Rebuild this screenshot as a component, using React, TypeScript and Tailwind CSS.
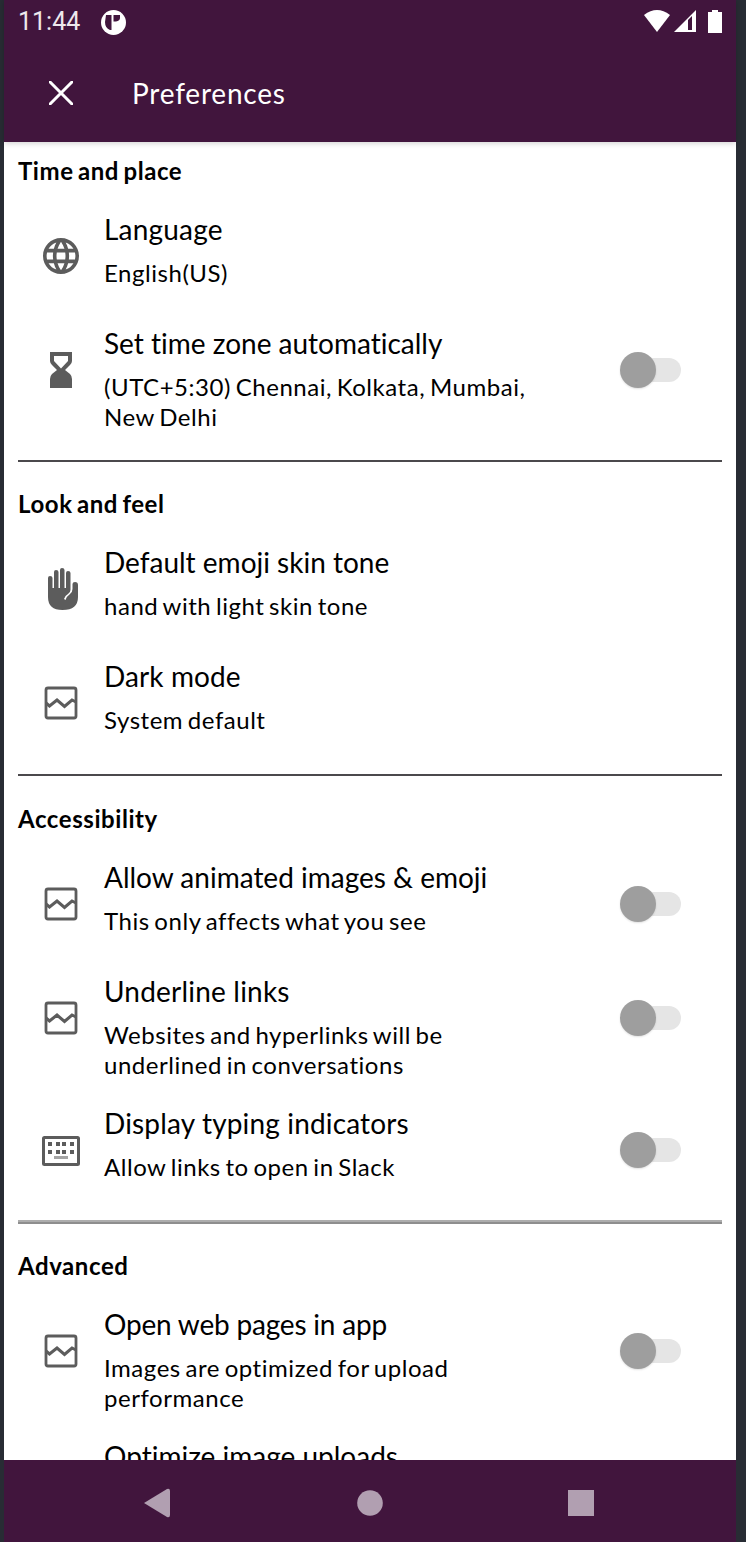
import type { ReactNode } from "react";

const Globe = () => (
  <svg width="36" height="36" viewBox="2 2 20 20" fill="#5c5c5c" className="block">
    <path d="M11.99 2C6.47 2 2 6.48 2 12s4.47 10 9.99 10C17.52 22 22 17.52 22 12S17.52 2 11.99 2zm6.93 6h-2.95c-.32-1.25-.78-2.45-1.38-3.56 1.84.63 3.37 1.91 4.33 3.56zM12 4.04c.83 1.2 1.48 2.53 1.91 3.96h-3.82c.43-1.43 1.08-2.76 1.91-3.96zM4.26 14C4.1 13.36 4 12.69 4 12s.1-1.36.26-2h3.38c-.08.66-.14 1.32-.14 2s.06 1.34.14 2H4.26zm.82 2h2.95c.32 1.25.78 2.45 1.38 3.56-1.84-.63-3.37-1.9-4.33-3.56zm2.95-8H5.08c.96-1.66 2.49-2.93 4.33-3.56C8.81 5.55 8.35 6.75 8.03 8zM12 19.96c-.83-1.2-1.48-2.53-1.91-3.96h3.82c-.43 1.43-1.08 2.76-1.91 3.96zM14.34 14H9.66c-.09-.66-.16-1.32-.16-2s.07-1.35.16-2h4.68c.09.65.16 1.32.16 2s-.07 1.34-.16 2zm.25 5.56c.6-1.11 1.06-2.31 1.38-3.56h2.95c-.96 1.65-2.49 2.93-4.33 3.56zM16.36 14c.08-.66.14-1.32.14-2s-.06-1.34-.14-2h3.38c.16.64.26 1.31.26 2s-.1 1.36-.26 2h-3.38z" />
  </svg>
);

const Hourglass = () => (
  <svg width="22" height="36" viewBox="0 0 22 36" fill="#5c5c5c" className="block">
    <path d="M0 0H22V9Q22 11 20 13L15 18L20 22Q22 24 22 27V36H0V27Q0 24 2 22L7 18L2 13Q0 11 0 9ZM4 4V9L11 16.500L18 9V4Z" fillRule="evenodd" />
  </svg>
);

const Hand = () => (
  <svg width="30" height="42" viewBox="0 0 30 42" fill="#5c5c5c" className="ml-[3px] block">
    <path d="M0 10Q0 8 2 8Q4.500 8 4.500 10V20H6V4Q6 2 8 2Q10.500 2 10.500 4V20H12V2Q12 0 14 0Q16.500 0 16.500 2V20H18V5Q18 3 20 3Q22.500 3 22.500 5V22Q22.500 24 20 26Q16.500 28 16 31L17.500 32Q19 28 22 26Q24.500 24 24.500 21V16Q24.500 14 27 14Q30 14 30 17V29Q30 42 14.500 42Q0 42 0 29Z" />
  </svg>
);

const Picture = () => (
  <svg width="34" height="34" viewBox="0 0 34 34" fill="none" stroke="#5c5c5c" className="block">
    <rect x="2" y="2" width="30" height="30" rx="2" strokeWidth="2.800" />
    <path d="M2 17L5.500 20L13 14L20.500 20.500L28 14L32 16" strokeWidth="3" />
  </svg>
);

const Keyboard = () => (
  <svg width="38" height="30" viewBox="0 0 38 30" className="mt-[1px] block">
    <rect x="1.500" y="1.500" width="35" height="27" rx="1" fill="none" stroke="#5c5c5c" strokeWidth="3" />
    <path d="M6 6h4v4H6zM14 6h4v4h-4zM20 6h4v4h-4zM28 6h4v4h-4zM6 14h4v4H6zM14 14h4v4h-4zM20 14h4v4h-4zM28 14h4v4h-4z" fill="#5c5c5c" />
    <path d="M12 20h14v3H12z" fill="#a5a5a5" />
  </svg>
);

const Toggle = () => (
  <div className="mr-[55px] flex h-[114px] w-[61px] shrink-0 items-center">
    <div className="z-10 h-9 w-9 rounded-full bg-[#9e9e9e] shadow-[0_1px_2px_rgba(0,0,0,0.12)]" />
    <div className="-ml-7 h-6 w-[53px] shrink-0 rounded-full bg-[#e5e5e5]" />
  </div>
);

type RowProps = {
  icon?: ReactNode;
  title: string;
  lines?: string[];
  toggle?: boolean;
  height?: string;
  tracking?: string;
};

const Row = ({ icon, title, lines = [], toggle, height = "h-[114px]", tracking = "" }: RowProps) => (
  <div className={`flex shrink-0 ${height}`}>
    <div className="flex h-[114px] w-[100px] shrink-0 items-center justify-center pl-[14px]">{icon}</div>
    <div className="flex-1 whitespace-nowrap pt-[13px]">
      <div className={`text-[28px] leading-[34px] ${tracking}`}>{title}</div>
      <div className="mt-[12px] text-[24px] leading-[30px] tracking-[0.54px] [word-spacing:-2px]">
        {lines.map((line) => (
          <div key={line}>{line}</div>
        ))}
      </div>
    </div>
    {toggle && <Toggle />}
  </div>
);

const Label = ({ children, size = "h-[70px] pt-[27px]" }: { children: string; size?: string }) => (
  <h2 className={`shrink-0 pl-[14px] text-[24px] font-bold leading-[30px] tracking-[0.57px] [word-spacing:-2px] ${size}`}>
    {children}
  </h2>
);

const Divider = ({ line = "h-[2px] bg-[#4b494c]" }: { line?: string }) => (
  <div className={`mx-[14px] shrink-0 ${line}`} />
);

export default function App() {
  return (
    <div className="flex h-[1542px] w-[746px] bg-[#282c34] pl-1 pr-[10px] font-['Lato',sans-serif] text-black [font-variant-ligatures:none]">
      <div className="flex w-[732px] flex-col bg-white">
        <header className="z-10 h-[142px] shrink-0 bg-[#41153d] text-white shadow-[0_1px_6px_rgba(0,0,0,0.2)]">
          <div className="flex h-11 items-center pl-[14px] pr-[14px]">
            <span className="w-[83px] font-['Roboto',sans-serif] text-[25px] leading-[44px] text-[#eee8ed]">11:44</span>
            <svg width="25" height="25" viewBox="0 0 25 25">
              <circle cx="12.500" cy="12.500" r="12.500" fill="#fff" />
              <path d="M5 5H10.500V20H9Q4 18 4 12ZM12.500 5H19V8Q19 10.500 15 11.500H12.500Z" fill="#41153d" />
            </svg>
            <svg width="78" height="24" viewBox="0 0 78 24" fill="#fff" className="ml-auto">
              <path d="M0 5Q13-5 26 5L13 22Z" />
              <path fillRule="evenodd" d="M30 22L52 0V22ZM44 10V20H48V6Z" />
              <path d="M64 2H68V0H74V2H78V23H64Z" />
            </svg>
          </div>
          <div className="flex h-[98px] items-center pl-[45px]">
            <svg width="24" height="24" viewBox="0 0 24 24" fill="none" stroke="#fff" strokeWidth="3">
              <path d="M0 0L24 24M24 0L0 24" />
            </svg>
            <h1 className="ml-[59px] text-[28px] leading-[34px] tracking-[0.8px]">Preferences</h1>
          </div>
        </header>
        <main className="flex h-[1318px] flex-col overflow-hidden">
          <Label size="h-[57px] pt-[14px]">Time and place</Label>
          <Row icon={<Globe />} title="Language" lines={["English(US)"]} tracking="tracking-[0.2px]" />
          <Row
            icon={<Hourglass />}
            title="Set time zone automatically"
            lines={["(UTC+5:30) Chennai, Kolkata, Mumbai,", "New Delhi"]}
            toggle
            height="h-[147px]"
          />
          <Divider />
          <Label>Look and feel</Label>
          <Row icon={<Hand />} title="Default emoji skin tone" lines={["hand with light skin tone"]} />
          <Row icon={<Picture />} title="Dark mode" lines={["System default"]} height="h-[128px]" tracking="tracking-[0.1px]" />
          <Divider />
          <Label size="h-[71px] pt-[28px]">Accessibility</Label>
          <Row icon={<Picture />} title="Allow animated images & emoji" lines={["This only affects what you see"]} toggle />
          <Row
            icon={<Picture />}
            title="Underline links"
            lines={["Websites and hyperlinks will be", "underlined in conversations"]}
            toggle
            height="h-[132px]"
            tracking="tracking-[0.2px]"
          />
          <Row
            icon={<Keyboard />}
            title="Display typing indicators"
            lines={["Allow links to open in Slack"]}
            toggle
            height="h-[127px]"
            tracking="tracking-[0.16px]"
          />
          <Divider line="h-[4px] border-t-2 border-[#adadad] bg-[#8e8e8e]" />
          <Label>Advanced</Label>
          <Row
            icon={<Picture />}
            title="Open web pages in app"
            lines={["Images are optimized for upload", "performance"]}
            toggle
            height="h-[132px]"
            tracking="tracking-[-0.2px]"
          />
          <Row title="Optimize image uploads" />
        </main>
        <nav className="flex h-[82px] shrink-0 items-center bg-[#41153d] pl-[140px] pt-[4px]">
          <svg width="450" height="30" viewBox="0 0 450 30" fill="#b19fb1">
            <path d="M0 15L23 1Q26 0 26 3V27Q26 30 23 29Z" />
            <circle cx="226" cy="15" r="12.800" />
            <path d="M424 2h26v26h-26z" />
          </svg>
        </nav>
      </div>
    </div>
  );
}
